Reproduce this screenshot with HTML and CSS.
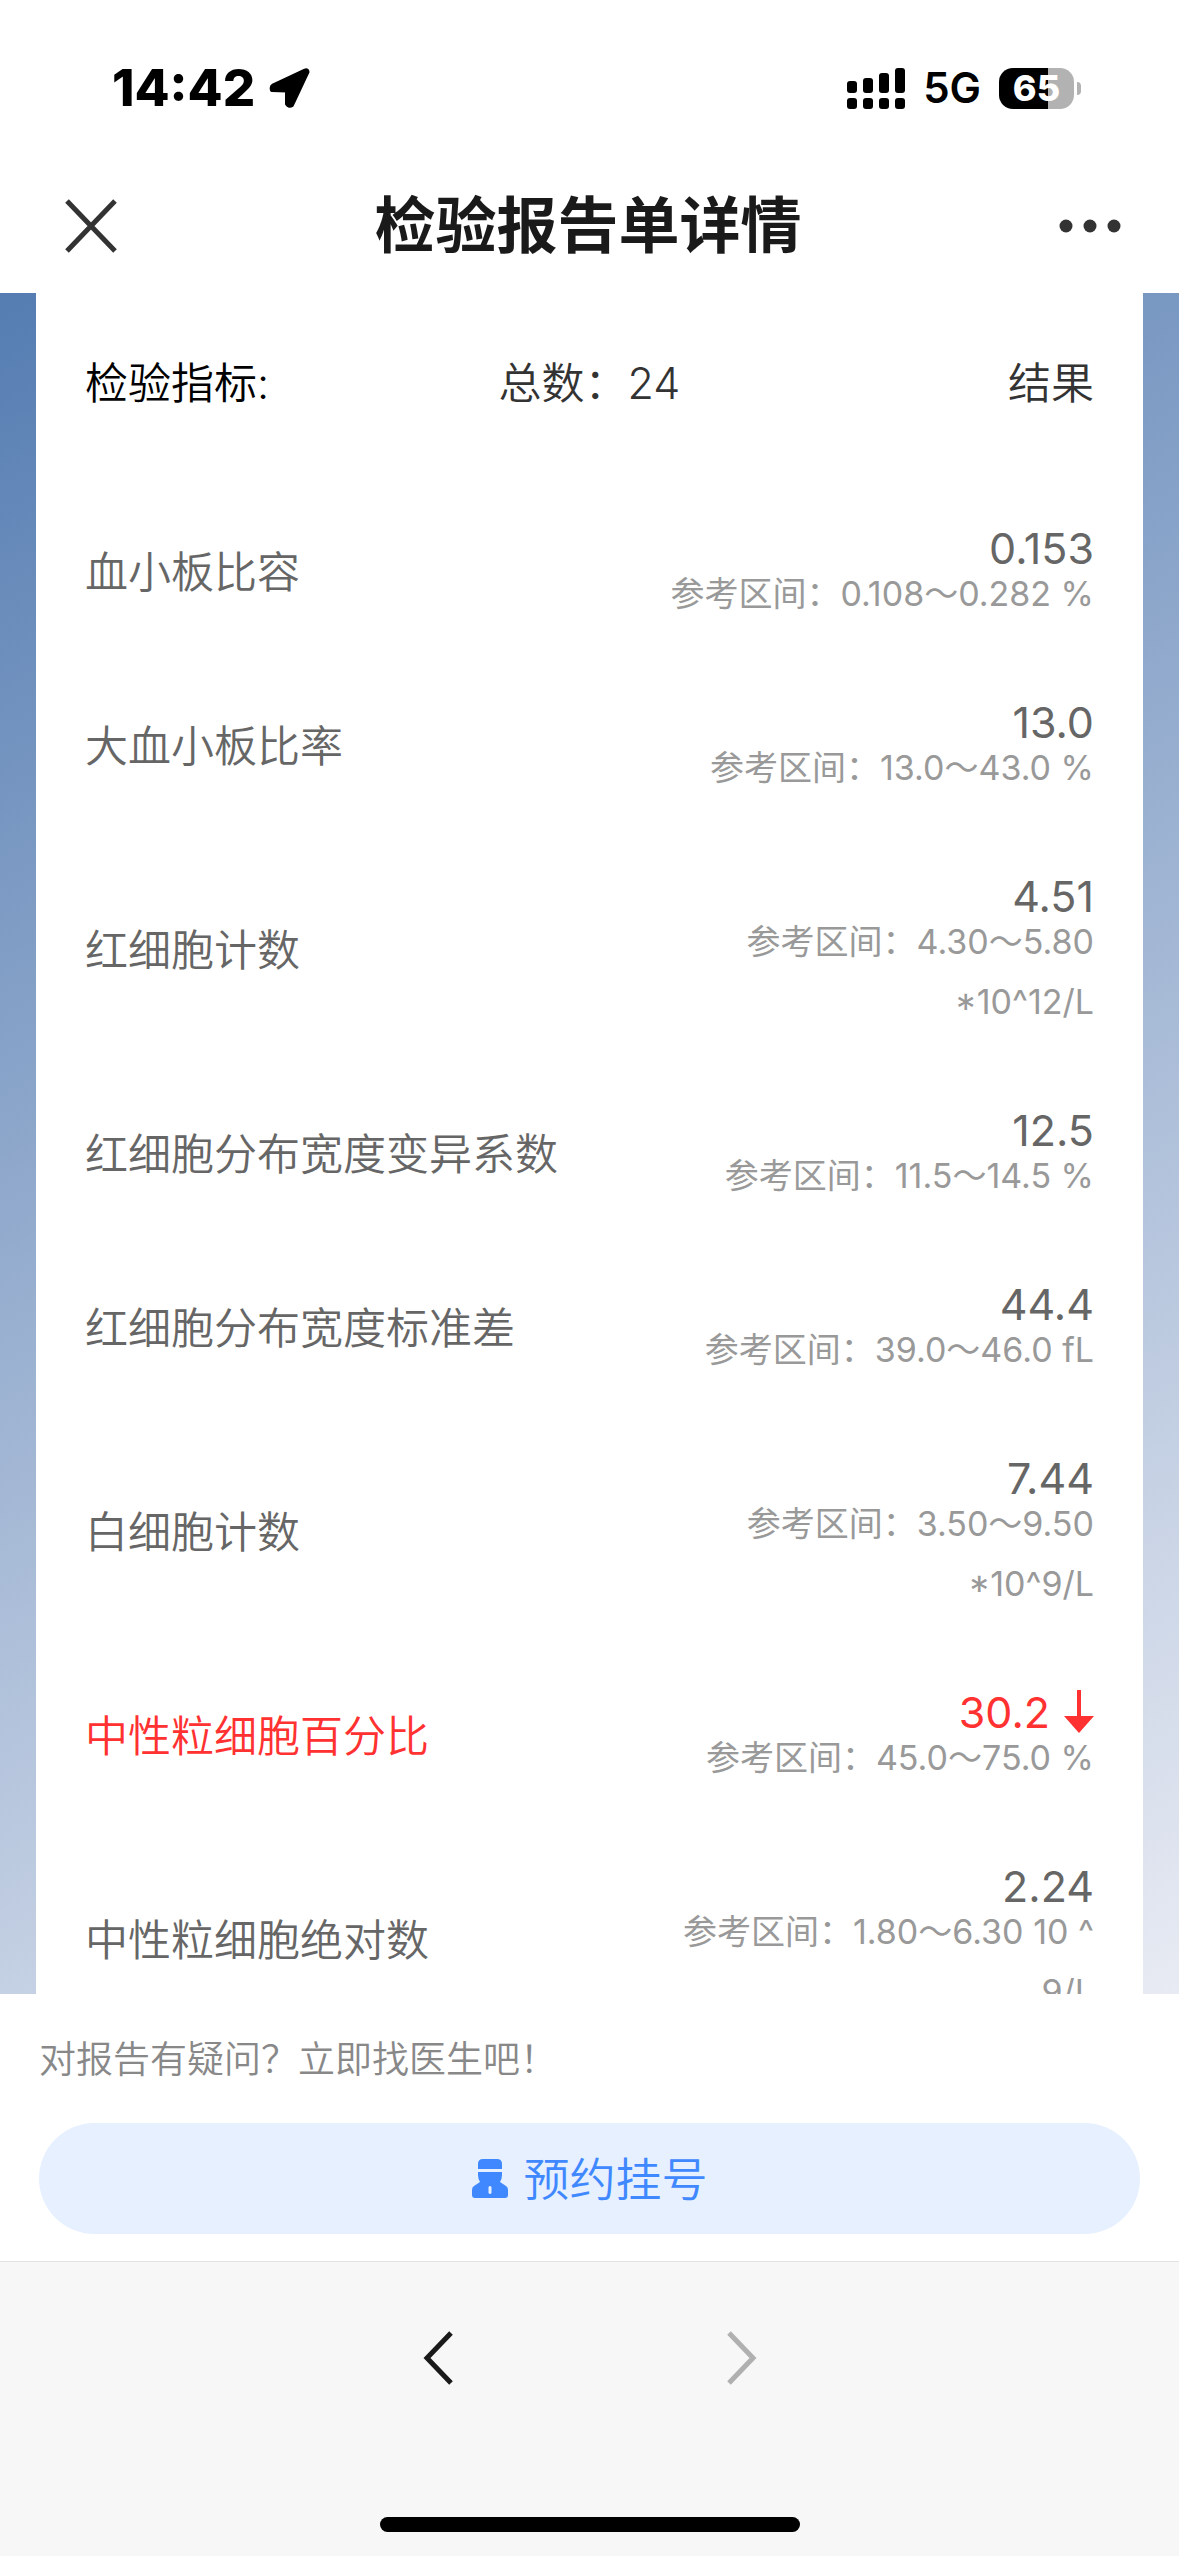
FILE: index.html
```
<!DOCTYPE html>
<html lang="zh-CN">
<head>
    <meta charset="UTF-8">
    <meta name="viewport" content="width=device-width, initial-scale=1.0">
    <title>检验报告单详情</title>
    <link rel="stylesheet" href="styles.css">
</head>
<body>
    <header>
        <div class="status">
            <div class="status-left">
                <span class="time">14:42</span>
                <svg width="42" height="42" viewBox="0 0 42 42"><path d="M36 3.500L4 18.500Q2 20 3 23L18 23.500V37Q20 40 23 38L38.500 5Q38.500 2.500 36 3.500Z" stroke="#000" stroke-width="4" stroke-linejoin="round"/></svg>
            </div>
            <div class="status-right">
                <svg width="58" height="41" viewBox="0 0 58 41">
                    <rect x="0" y="13" width="10" height="12" rx="3"/><rect x="0" y="30" width="10" height="11" rx="3"/>
                    <rect x="16" y="10" width="10" height="15" rx="3"/><rect x="16" y="30" width="10" height="11" rx="3"/>
                    <rect x="32" y="5" width="10" height="20" rx="3"/><rect x="32" y="30" width="10" height="11" rx="3"/>
                    <rect x="48" y="0" width="10" height="25" rx="3"/><rect x="48" y="30" width="10" height="11" rx="3"/>
                </svg>
                <span class="network">5G</span>
                <div class="battery"><span>65</span></div>
            </div>
        </div>
        <div class="titlebar">
            <button class="icon-btn" aria-label="关闭">
                <svg width="52" height="54" viewBox="0 0 52 54"><path d="M2 2L50 52M50 2L2 52" stroke="#333" stroke-width="5"/></svg>
            </button>
            <h1>检验报告单详情</h1>
            <button class="icon-btn" aria-label="更多">
                <svg width="62" height="14" viewBox="0 0 62 14" fill="#333"><circle cx="7" cy="7" r="6.500"/><circle cx="31" cy="7" r="6.500"/><circle cx="55" cy="7" r="6.500"/></svg>
            </button>
        </div>
    </header>

    <main>
        <div class="card">
            <div class="card-head">
                <span class="label">检验指标:</span>
                <span class="total">总数：24</span>
                <span class="result">结果</span>
            </div>
            <table>
                <tr>
                    <td>血小板比容</td>
                    <td><b>0.153</b><p>参考区间：0.108～0.282 %</p></td>
                </tr>
                <tr>
                    <td>大血小板比率</td>
                    <td><b>13.0</b><p>参考区间：13.0～43.0 %</p></td>
                </tr>
                <tr>
                    <td>红细胞计数</td>
                    <td><b>4.51</b><p>参考区间：4.30～5.80 <span class="unit">*10^12/L</span></p></td>
                </tr>
                <tr>
                    <td>红细胞分布宽度变异系数</td>
                    <td><b>12.5</b><p>参考区间：11.5～14.5 %</p></td>
                </tr>
                <tr>
                    <td>红细胞分布宽度标准差</td>
                    <td><b>44.4</b><p>参考区间：39.0～46.0 fL</p></td>
                </tr>
                <tr>
                    <td>白细胞计数</td>
                    <td><b>7.44</b><p>参考区间：3.50～9.50 <span class="unit">*10^9/L</span></p></td>
                </tr>
                <tr class="low">
                    <td>中性粒细胞百分比</td>
                    <td>
                        <b>30.2<svg width="30" height="44" viewBox="0 0 30 44" fill="#ff3131"><path d="M13 0h4v26h13L15 43L0 26h13z"/></svg></b>
                        <p>参考区间：45.0～75.0 %</p>
                    </td>
                </tr>
                <tr>
                    <td>中性粒细胞绝对数</td>
                    <td><b>2.24</b><p>参考区间：1.80～6.30 10 ^ <span class="unit">9/L</span></p></td>
                </tr>
            </table>
        </div>
    </main>

    <section class="ask">
        <p>对报告有疑问？立即找医生吧！</p>
        <button class="book">
            <svg width="36" height="40" viewBox="0 0 36 40" fill="#4088ff">
                <path d="M6 10V5Q6 0 11 0H25Q30 0 30 5V10Z"/>
                <path fill-rule="evenodd" d="M6 13H30V16Q30 20 28 23L34 27Q36 28 36 31V36Q36 39 33 39H3Q0 39 0 36V31Q0 28 2 27L8 23Q6 20 6 16ZM16.500 28V34Q18 36 19.500 34V28Q18 26 16.500 28Z"/>
            </svg>
            预约挂号
        </button>
    </section>

    <footer>
        <nav>
            <button class="icon-btn" aria-label="后退">
                <svg width="30" height="54" viewBox="0 0 30 54"><path d="M28 2L4 27L28 52" fill="none" stroke="#1a1a1a" stroke-width="5"/></svg>
            </button>
            <button class="icon-btn" aria-label="前进" disabled>
                <svg width="30" height="54" viewBox="0 0 30 54"><path d="M2 2L26 27L2 52" fill="none" stroke="#b0b0b0" stroke-width="5"/></svg>
            </button>
        </nav>
        <div class="home-bar"></div>
    </footer>
</body>
</html>
```
FILE: styles.css
```
* {
    box-sizing: border-box;
}
body {
    margin: 0;
    height: 100vh;
    display: flex;
    flex-direction: column;
    background-color: #ffffff;
    color: #666666;
    font-family: 'Inter', 'Noto Sans CJK SC', sans-serif;
    font-size: 43px;
    font-weight: 350;
    line-height: 60px;
}
h1, p {
    margin: 0;
}
svg {
    display: block;
    flex: none;
}
button {
    font-family: inherit;
    font-weight: inherit;
    line-height: inherit;
    border: none;
    cursor: pointer;
}
.icon-btn {
    padding: 0;
    background: none;
}

/* status bar */
.status {
    display: flex;
    justify-content: space-between;
    align-items: center;
    height: 176px;
    padding: 0 105px 0 112px;
    color: #000000;
}
.status-left, .status-right {
    display: flex;
    align-items: center;
}
.status-left {
    gap: 14px;
}
.status-right {
    gap: 18px;
}
.time {
    font-size: 51px;
    font-weight: 800;
}
.network {
    font-size: 42px;
    font-weight: 600;
}
.battery {
    position: relative;
    width: 75px;
    height: 41px;
    border-radius: 14px;
    background: linear-gradient(to right, #000000 65%, #b2b2b2 65%);
    color: #ffffff;
    font-size: 36px;
    font-weight: 800;
    line-height: 41px;
    text-align: center;
}
.battery::after {
    content: "";
    position: absolute;
    right: -7px;
    top: 14px;
    width: 4px;
    height: 13px;
    border-radius: 0 4px 4px 0;
    background-color: #b2b2b2;
}

/* title */
.titlebar {
    display: flex;
    justify-content: space-between;
    align-items: center;
    height: 100px;
    margin-bottom: 17px;
    padding: 0 58px 0 65px;
}
h1 {
    color: #1a1a1a;
    font-size: 61px;
    font-weight: 700;
    line-height: 102px;
}

/* report */
main {
    flex: 1;
    min-height: 0;
    overflow: hidden;
    padding: 0 36px;
    background: linear-gradient(155deg, #557db2, #e8ebf3);
}
.card {
    padding: 0 49px;
    background-color: #ffffff;
}
.card-head {
    display: grid;
    grid-template-columns: 1fr 1fr 1fr;
    align-items: center;
    height: 192px;
    padding-bottom: 12px;
    color: #333333;
}
.label {
    color: #000000;
}
.total {
    text-align: center;
}
.result {
    text-align: right;
}
table {
    width: 100%;
    border-collapse: collapse;
}
td {
    padding: 35px 0;
}
td:last-child {
    width: 43%;
    text-align: right;
}
td b {
    display: flex;
    justify-content: flex-end;
    align-items: center;
    gap: 14px;
    height: 44px;
    padding-top: 12px;
    font-weight: 400;
    line-height: 32px;
}
td p {
    color: #999999;
    font-size: 34px;
    font-weight: 400;
}
.unit {
    white-space: nowrap;
}
.low td, .low b {
    color: #ff3131;
}

/* ask a doctor */
.ask {
    padding: 36px 39px 27px;
}
.ask p {
    margin-bottom: 33px;
    color: #888888;
    font-size: 37px;
}
.book {
    display: flex;
    justify-content: center;
    align-items: center;
    gap: 16px;
    width: 100%;
    height: 111px;
    border-radius: 56px;
    background-color: #e6f0ff;
    color: #4088ff;
    font-size: 46px;
}

/* bottom bar */
footer {
    padding-bottom: 24px;
    border-top: 1px solid #e3e3e3;
    background-color: #f7f7f7;
}
nav {
    display: flex;
    justify-content: center;
    gap: 274px;
    padding: 69px 0 132px;
}
.home-bar {
    width: 420px;
    height: 15px;
    margin: 0 auto;
    border-radius: 8px;
    background-color: #000000;
}
```
